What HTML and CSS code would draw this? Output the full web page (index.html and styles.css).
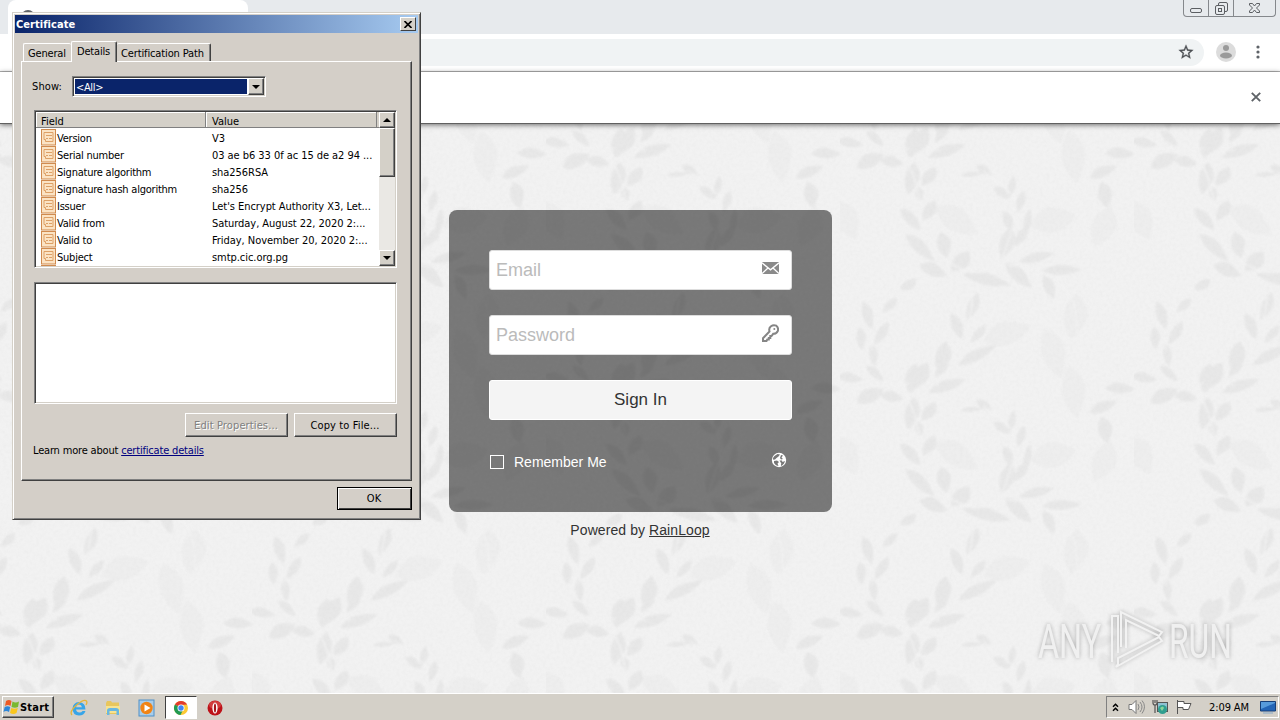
FILE: index.html
```html
<!DOCTYPE html>
<html lang="en">
<head>
    <meta charset="UTF-8">
    <meta name="viewport" content="width=device-width, initial-scale=1.0">
    <title>RainLoop</title>
    <link rel="stylesheet" href="styles.css">
</head>
<body>
<div class="desktop">
    <header class="tabstrip">
        <div class="tab"><span class="favicon"></span></div>
        <span class="new-tab">+</span>
        <div class="window-buttons">
            <span><svg width="12" height="5" viewBox="0 0 12 5"><rect x=".5" y=".5" width="11" height="4" rx="1.5"/></svg></span>
            <span><svg width="13" height="13" viewBox="0 0 13 13"><path d="M3.5 3.5V2q0-1.500 1.500-1.500h6q1.500 0 1.500 1.500v6q0 1.500-1.500 1.500H9.500"/><rect x=".5" y="3.500" width="9" height="9" rx="1.500"/><rect x="3.500" y="6.500" width="3" height="3"/></svg></span>
            <span><svg width="11" height="10" viewBox="0 0 11 10"><path d="M.5.5h3l2 2.500 2-2.500h3v1.500L7.500 5l3 3v1.500h-3l-2-2.500-2 2.500h-3V8l3-3-3-3z"/></svg></span>
        </div>
    </header>
    <div class="toolbar">
        <div class="omnibox">
            <svg width="16" height="16" viewBox="1 1 22 22"><path d="M22 9.240l-7.190-.620L12 2 9.190 8.630 2 9.240l5.460 4.730L5.820 21 12 17.270 18.180 21l-1.630-7.030L22 9.240zM12 15.400l-3.760 2.270 1-4.280-3.320-2.880 4.380-.380L12 6.100l1.710 4.040 4.380.380-3.320 2.880 1 4.280L12 15.400z" fill="#4d5054" stroke="#4d5054" stroke-width=".4"/></svg>
        </div>
        <svg class="avatar" width="20" height="20" viewBox="0 0 20 20"><circle cx="10" cy="10" r="10" fill="#dcdcdc"/><circle cx="10" cy="6" r="3" fill="#9a9a9a"/><ellipse cx="10" cy="13.500" rx="6" ry="3" fill="#9a9a9a"/></svg>
        <svg class="kebab" width="4" height="14" viewBox="0 0 4 14"><circle cx="2" cy="2" r="1.600"/><circle cx="2" cy="7" r="1.600"/><circle cx="2" cy="12" r="1.600"/></svg>
    </div>
    <div class="infobar">
        <svg width="10" height="10" viewBox="0 0 10 10"><path d="M.8.8l8.400 8.400M9.200.8L.8 9.200" stroke="#5f6368" stroke-width="1.900"/></svg>
    </div>

    <main class="page">
        <svg class="wallpaper" width="1280" height="569">
            <defs>
                <path id="leaf" d="M-50 0Q-20-26 8-17 34-9 50 2 30 15 5 17-25 19-50 0z"/>
                <filter id="soft" x="-5%" y="-5%" width="110%" height="110%">
                    <feGaussianBlur stdDeviation="2.500"/>
                </filter>
                <filter id="grain" x="0" y="0" width="100%" height="100%">
                    <feTurbulence type="fractalNoise" baseFrequency=".3" numOctaves="3" seed="4"/>
                    <feColorMatrix values="0 0 0 0 .45  0 0 0 0 .45  0 0 0 0 .45  .5 .5 0 0 -.38"/>
                </filter>
                <g id="branches">
                    <g class="faint-leaves">
                        <use href="#leaf" transform="translate(640 300) rotate(-15) scale(1.400 2.200)"/>
                        <use href="#leaf" transform="translate(705 590) rotate(95) scale(1.400 2)"/>
                        <use href="#leaf" transform="translate(790 320) rotate(110) scale(1.300 2)"/>
                        <use href="#leaf" transform="translate(640 700) rotate(70) scale(1.600 2)"/>
                        <use href="#leaf" transform="translate(500 640) rotate(-20) scale(1.500 2)"/>
                        <use href="#leaf" transform="translate(700 110) rotate(80) scale(1.600 2)"/>
                        <use href="#leaf" transform="translate(20 300) rotate(60) scale(1.300 2)"/>
                        <use href="#leaf" transform="translate(350 300) rotate(30) scale(1.500 2)"/>
                    </g>
                    <g class="leaves">
                        <use href="#leaf" transform="translate(30 68) rotate(8) scale(.8 .8)"/>
                        <use href="#leaf" transform="translate(105 55) rotate(40) scale(.7)"/>
                        <use href="#leaf" transform="translate(90 122) rotate(-28) scale(.9 1.200)"/>
                        <use href="#leaf" transform="translate(155 125) rotate(8) scale(.7 .9)"/>
                        <use href="#leaf" transform="translate(220 70) rotate(98) scale(.9 1.400)"/>
                        <use href="#leaf" transform="translate(320 92) rotate(-20) scale(1.200 .9)"/>
                        <use href="#leaf" transform="translate(305 40) rotate(125) scale(.7)"/>
                        <use href="#leaf" transform="translate(215 175) rotate(100) scale(1 1.200)"/>
                        <use href="#leaf" transform="translate(267 170) rotate(125) scale(.7 1)"/>
                        <use href="#leaf" transform="translate(238 222) rotate(75) scale(.45 .7)"/>
                        <use href="#leaf" transform="translate(395 163) rotate(-5) scale(.7 .4)"/>
                        <use href="#leaf" transform="translate(432 150) rotate(30) scale(.55 .7)"/>
                        <use href="#leaf" transform="translate(485 218) rotate(35) scale(.6 .7)"/>
                        <use href="#leaf" transform="translate(515 200) rotate(100) scale(.7 .6)"/>
                        <use href="#leaf" transform="translate(542 245) rotate(105) scale(.7)"/>
                        <use href="#leaf" transform="translate(562 310) rotate(98) scale(.9 .6)"/>
                        <use href="#leaf" transform="translate(505 305) rotate(65) scale(.7 .8)"/>
                        <use href="#leaf" transform="translate(500 370) rotate(105) scale(1 1.200)"/>
                        <use href="#leaf" transform="translate(543 350) rotate(120) scale(.7 .8)"/>
                        <use href="#leaf" transform="translate(212 297) rotate(45) scale(.9)"/>
                        <use href="#leaf" transform="translate(268 272) rotate(120) scale(.7 1)"/>
                        <use href="#leaf" transform="translate(240 382) rotate(42) scale(1.200 1)"/>
                        <use href="#leaf" transform="translate(312 375) rotate(75) scale(.8 1.200)"/>
                        <use href="#leaf" transform="translate(280 450) rotate(20) scale(.9 1.100)"/>
                        <use href="#leaf" transform="translate(362 425) rotate(130) scale(.8 1.300)"/>
                        <use href="#leaf" transform="translate(440 478) rotate(12) scale(1.500 1)"/>
                        <use href="#leaf" transform="translate(535 465) rotate(42) scale(1.100)"/>
                        <use href="#leaf" transform="translate(590 412) rotate(-15) scale(1.100 .8)"/>
                        <use href="#leaf" transform="translate(665 450) rotate(-3) scale(1.200 .8)"/>
                        <use href="#leaf" transform="translate(627 500) rotate(65) scale(.8 .9)"/>
                        <use href="#leaf" transform="translate(398 560) rotate(110) scale(.9)"/>
                        <use href="#leaf" transform="translate(352 620) rotate(65) scale(.9)"/>
                        <use href="#leaf" transform="translate(415 642) rotate(130) scale(.7)"/>
                        <use href="#leaf" transform="translate(83 585) rotate(70) scale(.9)"/>
                        <use href="#leaf" transform="translate(63 655) rotate(85) scale(.7 .8)"/>
                        <use href="#leaf" transform="translate(125 640) rotate(120) scale(.8)"/>
                        <use href="#leaf" transform="translate(150 555) rotate(135) scale(.6 .7)"/>
                        <use href="#leaf" transform="translate(205 495) rotate(145) scale(.6 .8)"/>
                        <use href="#leaf" transform="translate(100 705) rotate(80) scale(.7)"/>
                        <use href="#leaf" transform="translate(308 712) rotate(100) scale(1 1.300)"/>
                        <use href="#leaf" transform="translate(238 770) rotate(120) scale(1 1.300)"/>
                        <use href="#leaf" transform="translate(412 705) rotate(-28) scale(1.300 .9)"/>
                        <use href="#leaf" transform="translate(790 155) rotate(-25) scale(.9)"/>
                        <use href="#leaf" transform="translate(795 225) rotate(75) scale(.8 1.200)"/>
                        <use href="#leaf" transform="translate(840 100) scale(.9)"/>
                    </g>
                    <g class="stems">
                        <path d="M18 126Q80 85 150 85T300 90M160 80Q230 140 240 260M250 330Q280 400 350 440T480 435Q500 380 525 300T430 155M480 435Q560 435 610 465 720 500 710 640M95 690Q100 610 110 570 130 520 190 510M350 690Q390 620 400 530"/>
                    </g>
                </g>
                <pattern id="paper" width="294" height="235" x="840" y="-4" patternUnits="userSpaceOnUse">
                    <g transform="scale(.3333)" filter="url(#soft)">
                        <use href="#branches"/>
                        <use href="#branches" x="-882"/>
                        <use href="#branches" y="-705"/>
                        <use href="#branches" x="-882" y="-705"/>
                    </g>
                </pattern>
            </defs>
            <rect width="1280" height="569" fill="url(#paper)"/>
            <rect width="1280" height="569" filter="url(#grain)" opacity=".15"/>
        </svg>

        <form class="login">
            <label class="field">
                <input type="text" placeholder="Email">
                <svg width="17" height="12" viewBox="0 0 17 12"><path d="M0 0h17v12H0z" fill="#8a8a8a"/><path d="M0 .8l8.500 7L17 .8M0 11.600l6-5.500M17 11.600l-6-5.500" fill="none" stroke="#fff" stroke-width="1.300"/></svg>
            </label>
            <label class="field">
                <input type="password" placeholder="Password">
                <svg width="17" height="18" viewBox="0 0 17 18"><path d="M7.500 7.500Q6.500 4 9 2.200 11.500.400 14.300 1.700q2.500 2 1.500 5.300-1.500 3-4.600 2.800L9.500 12H8.300v2H6.800v1.500H5.300L4.500 17H1v-2.800z" fill="none" stroke="#858585" stroke-width="2"/><circle cx="12.300" cy="5" r="1" fill="#858585"/></svg>
            </label>
            <button type="button" class="sign-in">Sign In</button>
            <div class="options">
                <span class="checkbox"></span>
                <span>Remember Me</span>
                <svg width="16" height="16" viewBox="0 0 16 16"><circle cx="8" cy="8" r="7.200" fill="#fff"/><path d="M3.500 4L6.500 2 9 2.500 7.500 4.500 5.500 6 4 7.500 2.200 7.800 2 6zM10 3l2 .5-1.500 2L12 7l-2 .5-1-1.500zM3 9l3-.5L8 10l-1.500 1.500 1 2.500L5 13.300 3 11zM8.500 8.500l2.500 0 .5 1.500 2.500-1-1 2.500-2.500 2.500L9.800 13l.5-1.500z" fill="#777"/></svg>
            </div>
        </form>
        <div class="powered">Powered by <a href="#">RainLoop</a></div>

        <svg class="watermark" width="210" height="66" viewBox="0 0 210 66">
            <text transform="translate(1 51) scale(.66 1)">ANY</text>
            <text transform="translate(132 51) scale(.65 1)">RUN</text>
            <path d="M75 55V9h6v37M84 40V5l41 20-3 4-33-16v28M79 60l46-26-3-4-41 21v6z"/>
        </svg>
    </main>

    <footer class="taskbar">
        <div class="start">
            <svg width="17" height="16" viewBox="0 0 17 16"><path d="M3 2q3-2 5.500 0L7.500 7Q5 5 2 7z" fill="#ee5a24"/><path d="M9.500 2.500q3 2 6.500 0L15 8q-3 1.500-6.500 0z" fill="#7ab82f"/><path d="M1.700 8Q4.500 6.500 7.200 8L6 13Q3 11 .5 13z" fill="#2d86d9"/><path d="M8.300 9q3 1.500 6.500 0L13.500 14q-3 2-6.500 0z" fill="#f9c61c"/></svg>
            Start
        </div>
        <div class="launchers">
            <span><svg width="18" height="18" viewBox="0 0 18 18"><path d="M15.500 10.500H6q.5 3 3.500 3 2 0 3-1.500h3Q14 16.500 9 16.500 2.500 16 2.500 9.500 3 3.500 9 3q6.500.5 6.500 7.500zM6 8.200h6Q11.500 5.500 9 5.500T6 8.200z" fill="#38a5e8"/><path d="M2 16Q-1 13 6 6.500 14-.5 16.500 2q1 1.500-.5 4" fill="none" stroke="#e6b53a" stroke-width="1.300"/></svg></span>
            <span><svg width="18" height="18" viewBox="0 0 18 18"><path d="M2 4l1-2h4l1 1.500h7V15H2z" fill="#e8c65d"/><path d="M2 7h14v7H2z" fill="#f7e391"/><path d="M3 16v-4.500Q3 9 6 9h6q3 0 3 2.500V16h-2.500v-4h-7v4z" fill="#69b7e1"/></svg></span>
            <span><svg width="18" height="18" viewBox="0 0 18 18"><rect x="1" y="1" width="15" height="16" fill="#a8cdea" stroke="#4e8fc8"/><circle cx="8.500" cy="9" r="6.200" fill="#f18415"/><path d="M6.500 5.500l6 3.500-6 3.500z" fill="#fff"/></svg></span>
            <span class="running"><svg width="16" height="16" viewBox="0 0 16 16"><circle cx="8" cy="8" r="7" fill="#fcc934"/><path d="M8 8L1.900 4.500A7 7 0 0 1 14.100 4.500L8 5z" fill="#e33b2e"/><path d="M8 8L1.900 4.500A7 7 0 0 0 7.500 15L10 10z" fill="#219a52"/><circle cx="8" cy="8" r="3.500" fill="#fff"/><circle cx="8" cy="8" r="2.700" fill="#4285f4"/></svg></span>
            <span><svg width="18" height="18" viewBox="0 0 18 18"><circle cx="9" cy="9" r="7.500" fill="#bd1219"/><ellipse cx="9" cy="6" rx="6" ry="4" fill="#df5a55" opacity=".6"/><ellipse cx="9" cy="9" rx="2.600" ry="5.500" fill="#fff"/><ellipse cx="9" cy="9" rx="1.100" ry="4.500" fill="#a5151a"/></svg></span>
        </div>
        <div class="tray">
            <svg width="7" height="9" viewBox="0 0 7 9"><path d="M1 3.800L3.500 1.300 6 3.800M1 7.800l2.500-2.500L6 7.800" fill="none" stroke="#000" stroke-width="1.500"/></svg>
            <svg width="17" height="16" viewBox="0 0 17 16"><path d="M1 5.500h3l4-4v13l-4-4H1z" fill="#fff" stroke="#777"/><path d="M10 5q2 3 0 6M12 3q4 5 0 10M14 1.500q5 6 0 13" fill="none" stroke="#888"/></svg>
            <svg width="17" height="16" viewBox="0 0 17 16"><rect x="5.500" y="3.500" width="10" height="9" fill="#8ec1d2" stroke="#555"/><path d="M1 1v3q0 2 2 2v8M5 1v3q0 2-2 2M3 1v3" fill="none" stroke="#555" stroke-width="1.200"/><circle cx="10.500" cy="10.500" r="4.500" fill="#2f9e8f"/><path d="M8 9q3-3 4 0l-2 3z" fill="#8bd49a"/></svg>
            <svg width="16" height="16" viewBox="0 0 16 16"><path d="M1.500 1v14M2 2.500h6v2h7l-2.500 6H7v-2H2" fill="#fff" stroke="#555"/></svg>
            <span class="clock">2:09 AM</span>
            <svg width="16" height="13" viewBox="0 0 16 13"><path d="M.5.500h15v9.500H.5z" fill="#2365b6" stroke="#163f78"/><path d="M1 1h14v1L1 8z" fill="#579bdb"/><path d="M3 12h10" stroke="#85a8c8"/></svg>
        </div>
    </footer>

    <section class="dialog">
        <div class="titlebar">
            <span>Certificate</span>
            <span class="close"><svg width="8" height="7" viewBox="0 0 8 7"><path d="M.5 0l7 7M7.500 0l-7 7" stroke="#000" stroke-width="1.600"/></svg></span>
        </div>
        <div class="tabs">
            <span class="sheet-tab general">General</span>
            <span class="sheet-tab active">Details</span>
            <span class="sheet-tab path">Certification Path</span>
        </div>
        <div class="sheet">
            <div class="show">
                <span>Show:</span>
                <div class="combo"><span class="selected">&lt;All&gt;</span><span class="arrow"><i class="down"></i></span></div>
            </div>
            <div class="list">
                <div class="list-main">
                    <div class="list-head"><span>Field</span><span>Value</span></div>
                    <div class="list-body" id="fields"></div>
                </div>
                <div class="scrollbar">
                    <span class="arrow"><i class="up"></i></span>
                    <span class="thumb"></span>
                    <span class="arrow last"><i class="down"></i></span>
                </div>
            </div>
            <div class="detail-box"></div>
            <div class="actions">
                <span class="btn disabled">Edit Properties...</span>
                <span class="btn">Copy to File...</span>
            </div>
            <div class="learn">Learn more about <a href="#">certificate details</a></div>
        </div>
        <span class="btn ok">OK</span>
    </section>
</div>

<script>
    const rows = [
        ["Version", "V3"],
        ["Serial number", "03 ae b6 33 0f ac 15 de a2 94 ..."],
        ["Signature algorithm", "sha256RSA"],
        ["Signature hash algorithm", "sha256"],
        ["Issuer", "Let's Encrypt Authority X3, Let..."],
        ["Valid from", "Saturday, August 22, 2020 2:..."],
        ["Valid to", "Friday, November 20, 2020 2:..."],
        ["Subject", "smtp.cic.org.pg"],
        ["", ""]
    ];
    const icon = '<svg width="15" height="17" viewBox="0 0 15 17">' +
        '<rect x=".5" y=".5" width="14" height="15.500" fill="#fbe3c4" stroke="#d08b4f"/>' +
        '<path d="M3 3.500h9v9H4.500M3 3.500v7h1.500v2M5 6.500h6M5 9.500h2M8 9.500h3" fill="none" stroke="#dda066"/></svg>';
    const fields = document.getElementById('fields');
    rows.forEach(([name, value]) => {
        const row = document.createElement('div');
        row.className = 'row';
        row.innerHTML = icon + '<span class="name"></span><span class="value"></span>';
        row.querySelector('.name').textContent = name;
        row.querySelector('.value').textContent = value;
        fields.appendChild(row);
    });
</script>
</body>
</html>
```
FILE: styles.css
```css
* {
    box-sizing: border-box;
}
body {
    margin: 0;
    font-family: "Liberation Sans", Arial, sans-serif;
}
svg {
    display: block;
    flex: none;
}
.desktop {
    position: relative;
    display: flex;
    flex-direction: column;
    width: 1280px;
    height: 720px;
    overflow: hidden;
}

/* browser chrome */
.tabstrip {
    display: flex;
    height: 34px;
    padding-left: 8px;
    background: #e7eaed;
}
.tab {
    width: 240px;
    padding: 10px 0 0 13px;
    border-radius: 8px 8px 0 0;
    background: #fff;
}
.favicon {
    display: block;
    width: 14px;
    height: 14px;
    border: 2px solid #5f6368;
    border-radius: 50%;
}
.new-tab {
    padding: 8px 0 0 17px;
    font-size: 18px;
    line-height: 18px;
    color: #5f6368;
}
.window-buttons {
    display: flex;
    width: 93px;
    height: 17px;
    margin: 0 4px 0 auto;
    border: 1px solid #85888c;
    border-top: 0;
    border-radius: 0 0 4px 4px;
}
.window-buttons span {
    display: flex;
    justify-content: center;
    width: 25px;
    padding-top: 2px;
    border-right: 1px solid #85888c;
}
.window-buttons span:first-child {
    padding-top: 8px;
}
.window-buttons span:last-child {
    width: 41px;
    padding-top: 3px;
    border: 0;
}
.window-buttons svg {
    fill: none;
    stroke: #5b5e62;
}
.toolbar {
    display: flex;
    align-items: center;
    height: 38px;
    border-bottom: 1px solid #b4b4b4;
    background: #fff;
}
.omnibox {
    display: flex;
    align-items: center;
    justify-content: flex-end;
    width: 1108px;
    height: 27px;
    margin-left: 96px;
    padding: 0 10px 1px 0;
    border-radius: 14px;
    background: #f0f3f4;
}
.avatar {
    margin: -2px 0 0 12px;
}
.kebab {
    margin: -1px 0 0 20px;
    fill: #5f6368;
}
.infobar {
    position: relative;
    z-index: 1;
    display: flex;
    align-items: center;
    justify-content: flex-end;
    height: 52px;
    padding: 0 19px 2px 0;
    border-bottom: 1px solid #606060;
    background: #fff;
    box-shadow: 0 1px 5px rgba(0, 0, 0, .55);
}

/* login page */
.page {
    position: relative;
    display: flex;
    flex-direction: column;
    align-items: center;
    height: 569px;
    background: #f2f2f2;
}
.wallpaper {
    position: absolute;
    top: 0;
    left: 0;
}
.stems {
    fill: none;
    stroke: #f3f3f3;
    stroke-width: 4;
}
.leaves {
    fill: #e8e8e8;
}
.faint-leaves {
    fill: #eee;
}
.login {
    position: relative;
    display: flex;
    flex-direction: column;
    width: 383px;
    height: 302px;
    margin: 86px 0 0 1px;
    padding: 40px;
    border-radius: 8px;
    background: rgba(0, 0, 0, .5);
}
.field {
    display: flex;
    align-items: center;
    height: 40px;
    margin-bottom: 25px;
    padding: 0 12px 4px 6px;
    border: 1px solid #ddd;
    border-radius: 3px;
    background: #fff;
}
.field input {
    flex: 1;
    min-width: 0;
    padding: 4px 0 0;
    border: 0;
    outline: 0;
    background: none;
    font: 18px "Liberation Sans", Arial, sans-serif;
}
.field input::placeholder {
    color: #bbb;
}
.sign-in {
    height: 40px;
    padding: 0;
    border: 1px solid #fff;
    border-radius: 3px;
    background: #f4f4f4;
    font: 17px "Liberation Sans", Arial, sans-serif;
    color: #333;
}
.options {
    display: flex;
    align-items: center;
    margin-top: 32px;
    padding-right: 5px;
    font-size: 14px;
    line-height: 20px;
    color: #fff;
}
.options svg {
    margin: -4px 0 0 auto;
}
.checkbox {
    width: 14px;
    height: 14px;
    margin: 0 10px 0 1px;
    border: 1px solid #fff;
}
.powered {
    position: relative;
    margin-top: 10px;
    font-size: 14px;
    letter-spacing: .08px;
    line-height: 17px;
    color: #333;
}
.powered a {
    color: #333;
}
.watermark {
    position: absolute;
    right: 33px;
    bottom: 20px;
    font: 49px Roboto, sans-serif;
    filter: drop-shadow(0 0 2px rgba(0, 0, 0, .28));
}
.watermark text {
    fill: #f0f0f0;
}
.watermark path {
    fill: none;
    stroke: #f2f2f2;
    stroke-width: 2;
}

/* taskbar */
.taskbar {
    display: flex;
    height: 27px;
    padding: 2px 1px 1px 2px;
    border-top: 1px solid #fff;
    background: #d4d0c8;
    font: 11px "DejaVu Sans Condensed", Tahoma, sans-serif;
}
.start {
    display: flex;
    align-items: center;
    width: 52px;
    height: 22px;
    border: 1px solid;
    border-color: #fff #404040 #404040 #fff;
    box-shadow: inset -1px -1px #808080;
    font-weight: bold;
    letter-spacing: .2px;
}
.launchers {
    display: flex;
    margin-left: 8px;
}
.launchers span {
    display: flex;
    align-items: center;
    justify-content: center;
    width: 34px;
    height: 23px;
}
.launchers .running {
    width: 32px;
    margin: 0 1px;
    border: 1px solid;
    border-color: #404040 #fff #fff #404040;
    background: #fff;
}
.tray {
    display: flex;
    align-items: center;
    width: 173px;
    height: 22px;
    margin-left: auto;
    padding-left: 5px;
    border: 1px solid;
    border-color: #808080 #fff #fff #808080;
}
.tray svg + svg {
    margin-left: 9px;
}
.tray svg + svg + svg {
    margin-left: 7px;
}
.clock {
    width: 42px;
    margin: 0 9px 0 17px;
    white-space: nowrap;
    letter-spacing: -.1px;
}

/* certificate dialog */
.dialog {
    position: absolute;
    z-index: 2;
    top: 12px;
    left: 12px;
    width: 409px;
    height: 508px;
    padding: 2px;
    border: 1px solid;
    border-color: #d4d0c8 #404040 #404040 #d4d0c8;
    background: #d4cfc8;
    box-shadow: inset 1px 1px #fff, inset -1px -1px #808080;
    font: 11px/13px "DejaVu Sans Condensed", Tahoma, sans-serif;
    letter-spacing: -.18px;
    color: #000;
}
.titlebar {
    display: flex;
    align-items: center;
    justify-content: space-between;
    height: 18px;
    padding: 0 2px 0 1px;
    background: linear-gradient(90deg, #0a246a, #a6caf0);
    font-weight: bold;
    letter-spacing: .05px;
    color: #fff;
}
.close {
    display: flex;
    align-items: center;
    justify-content: center;
    width: 16px;
    height: 14px;
    border: 1px solid;
    border-color: #fff #404040 #404040 #fff;
    background: #d4d0c8;
}
.tabs {
    display: flex;
    align-items: flex-end;
    height: 28px;
    padding-left: 8px;
}
.sheet-tab {
    height: 18px;
    padding: 3px 0 0 4px;
    border: 1px solid;
    border-color: #fff #404040 transparent #fff;
    border-bottom: 0;
    border-radius: 2px 2px 0 0;
    white-space: nowrap;
}
.general {
    width: 48px;
    border-right: 0;
}
.active {
    position: relative;
    width: 46px;
    height: 21px;
    margin-bottom: -1px;
    padding: 3px 0 0 5px;
    background: #d4cfc8;
    box-shadow: inset -1px 0 #808080;
}
.path {
    width: 94px;
    padding-left: 4px;
    border-left: 0;
    box-shadow: inset -1px 0 #808080;
    letter-spacing: -.13px;
}
.sheet {
    width: 391px;
    height: 420px;
    margin-left: 6px;
    padding: 14px 14px 0 12px;
    border: 1px solid;
    border-color: #fff #404040 #404040 #fff;
    box-shadow: inset -1px -1px #808080;
}
.show {
    display: flex;
    align-items: center;
    height: 21px;
}
.show > span {
    width: 38px;
    margin-left: -2px;
    letter-spacing: .1px;
}
.combo {
    display: flex;
    width: 194px;
    height: 21px;
    margin-left: 2px;
    padding: 1px;
    border: 1px solid;
    border-color: #808080 #fff #fff #808080;
    background: #fff;
    box-shadow: inset 1px 1px #404040, inset -1px -1px #d4d0c8;
}
.selected {
    flex: 1;
    margin: 1px;
    padding: 2px 0 0 1px;
    background: #0a246a;
    letter-spacing: -.35px;
    color: #fff;
}
.arrow {
    display: flex;
    align-items: center;
    justify-content: center;
    width: 16px;
    height: 17px;
    border: 1px solid;
    border-color: #fff #404040 #404040 #fff;
    background: #d4d0c8;
    box-shadow: inset -1px -1px #808080;
}
.down,
.up {
    border: 4px solid transparent;
    border-bottom: 0;
    border-top-color: #000;
}
.up {
    border: 4px solid transparent;
    border-top: 0;
    border-bottom-color: #000;
}
.list,
.detail-box {
    width: 363px;
    border: 1px solid;
    border-color: #808080 #fff #fff #808080;
    background: #fff;
    box-shadow: inset 1px 1px #404040, inset -1px -1px #d4d0c8;
}
.list {
    display: flex;
    height: 158px;
    margin-top: 13px;
    padding: 1px;
}
.list-main {
    width: 343px;
    height: 154px;
    overflow: hidden;
}
.list-head {
    display: flex;
    height: 16px;
    background: #d4d0c8;
    border-bottom: 1px solid #808080;
}
.list-head span {
    width: 170px;
    padding: 3px 0 0 5px;
    border-right: 1px solid #808080;
    line-height: 13px;
    letter-spacing: 0;
    box-shadow: inset 1px 1px #fff;
}
.list-head span + span {
    width: 171px;
    padding-left: 6px;
}
.row {
    display: flex;
    align-items: center;
    height: 17px;
    padding-left: 5px;
}
.list-body {
    padding-top: 1px;
}
.name {
    width: 156px;
    padding: 2px 0 0 1px;
    letter-spacing: -.23px;
}
.value {
    padding-top: 2px;
    letter-spacing: -.05px;
}
.name,
.value {
    white-space: nowrap;
}
.scrollbar {
    display: flex;
    flex-direction: column;
    width: 16px;
    background: #eae8e4;
}
.scrollbar .arrow {
    height: 16px;
}
.thumb {
    height: 49px;
    border: 1px solid;
    border-color: #fff #404040 #404040 #fff;
    background: #d4d0c8;
    box-shadow: inset -1px -1px #808080;
}
.scrollbar .last {
    margin-top: auto;
}
.detail-box {
    height: 122px;
    margin-top: 14px;
}
.actions {
    display: flex;
    justify-content: flex-end;
    gap: 6px;
    margin-top: 9px;
}
.btn {
    display: flex;
    align-items: center;
    justify-content: center;
    width: 103px;
    height: 24px;
    padding-right: 1px;
    border: 1px solid;
    border-color: #fff #404040 #404040 #fff;
    box-shadow: inset -1px -1px #808080;
    letter-spacing: .12px;
}
.disabled {
    color: #808080;
    text-shadow: 1px 1px #fff;
}
.learn {
    margin: 7px 0 0 -1px;
}
.learn a {
    color: #00007f;
}
.ok {
    width: 75px;
    height: 23px;
    margin: 6px 0 0 322px;
    border-color: #000;
    box-shadow: inset 1px 1px #fff, inset -1px -1px #404040;
}
```
